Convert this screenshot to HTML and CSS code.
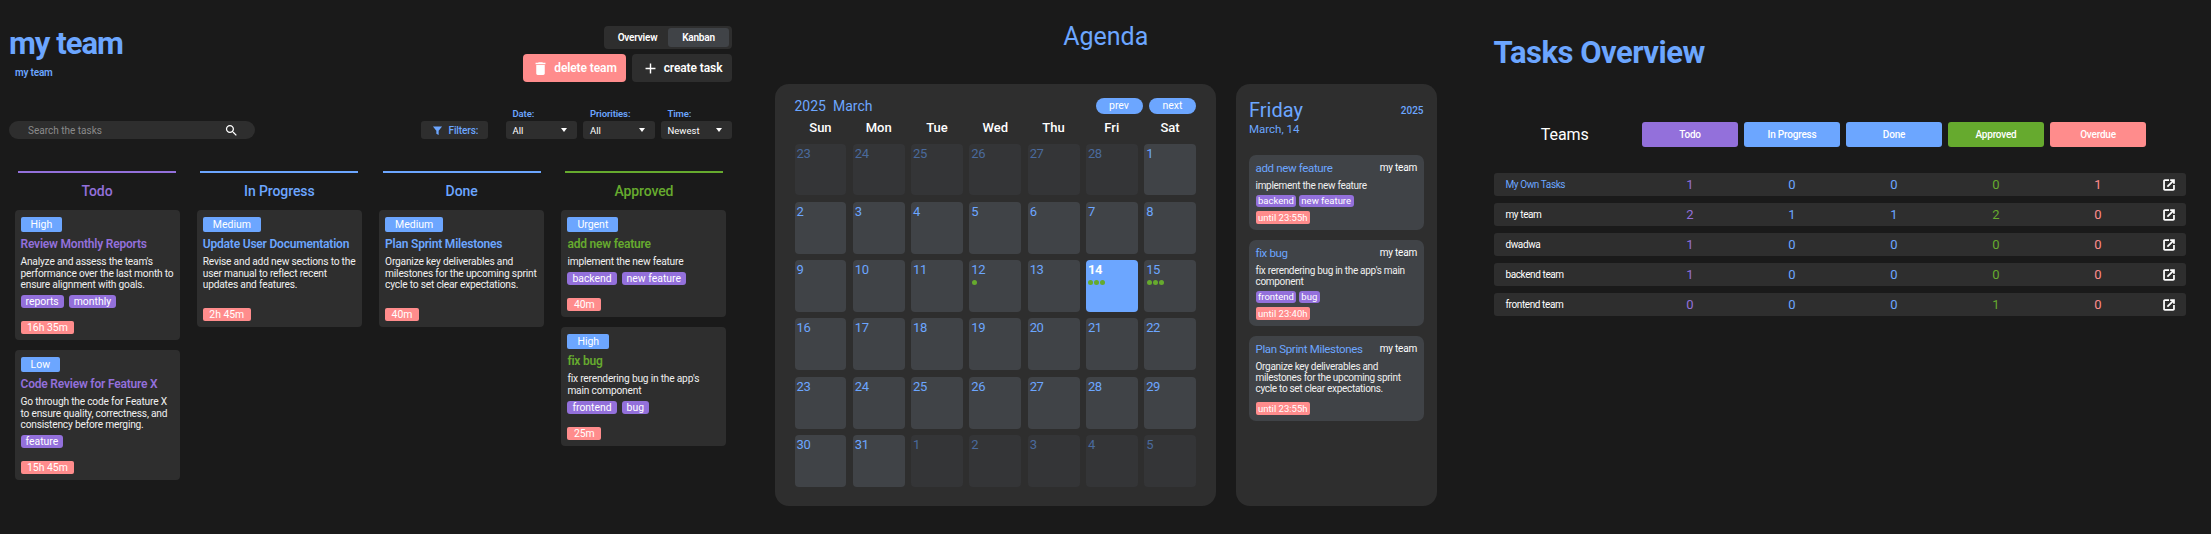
FILE: index.html
```html
<!DOCTYPE html>
<html lang="en">
<head>
  <meta charset="UTF-8" />
  <meta name="viewport" content="width=device-width, initial-scale=1.0"/>
  <title>Team Dashboard</title>
  <link rel="stylesheet" href="styles.css">
</head>
<body>
<div class="page">

  <!-- Kanban board -->
  <section class="board">
    <div class="board-head">
      <div>
        <h1>my team</h1>
        <div class="team-crumb">my team</div>
      </div>
      <div class="board-actions">
        <div class="tabs">
          <span class="tab">Overview</span>
          <span class="tab active">Kanban</span>
        </div>
        <div class="action-row">
          <button class="btn btn-delete">
            <svg viewBox="0 0 24 24" width="17" height="17"><path fill="#fff" d="M6 19c0 1.1.9 2 2 2h8c1.1 0 2-.9 2-2V7H6v12zM19 4h-3.5l-1-1h-5l-1 1H5v2h14V4z"/></svg>
            delete team
          </button>
          <button class="btn btn-create">
            <svg viewBox="0 0 24 24" width="17" height="17"><path fill="#fff" d="M19 13h-6v6h-2v-6H5v-2h6V5h2v6h6v2z"/></svg>
            create task
          </button>
        </div>
      </div>
    </div>

    <div class="toolbar">
      <div class="search">
        <input type="text" placeholder="Search the tasks" />
        <svg viewBox="0 0 24 24" width="15" height="15"><path fill="#fff" d="M15.5 14h-.79l-.28-.27C15.41 12.59 16 11.11 16 9.5 16 5.91 13.09 3 9.5 3S3 5.91 3 9.5 5.91 16 9.5 16c1.61 0 3.09-.59 4.23-1.57l.27.28v.79l5 4.99L20.49 19l-4.99-5zm-6 0C7.01 14 5 11.99 5 9.5S7.01 5 9.5 5 14 7.01 14 9.5 11.99 14 9.5 14z"/></svg>
      </div>
      <div class="filters-label">
        <svg viewBox="0 0 24 24" width="11" height="11"><path fill="#6ca6ff" d="M2 3h20l-7.5 9.5V22l-5-3v-6.500z"/></svg>
        Filters:
      </div>
      <div class="filter">
        <label>Date:</label>
        <div class="select"><span>All</span><i class="caret"></i></div>
      </div>
      <div class="filter">
        <label>Priorities:</label>
        <div class="select"><span>All</span><i class="caret"></i></div>
      </div>
      <div class="filter">
        <label>Time:</label>
        <div class="select"><span>Newest</span><i class="caret"></i></div>
      </div>
    </div>

    <div class="columns">
      <div class="column todo">
        <div class="column-title">Todo</div>
        <div class="card">
          <span class="priority">High</span>
          <div class="card-title">Review Monthly Reports</div>
          <p class="card-desc">Analyze and assess the team's performance over the last month to ensure alignment with goals.</p>
          <div class="tags"><span class="tag">reports</span><span class="tag">monthly</span></div>
          <span class="time">16h 35m</span>
        </div>
        <div class="card">
          <span class="priority">Low</span>
          <div class="card-title">Code Review for Feature X</div>
          <p class="card-desc">Go through the code for Feature X to ensure quality, correctness, and consistency before merging.</p>
          <div class="tags"><span class="tag">feature</span></div>
          <span class="time">15h 45m</span>
        </div>
      </div>

      <div class="column progress">
        <div class="column-title">In Progress</div>
        <div class="card">
          <span class="priority">Medium</span>
          <div class="card-title">Update User Documentation</div>
          <p class="card-desc">Revise and add new sections to the user manual to reflect recent updates and features.</p>
          <span class="time">2h 45m</span>
        </div>
      </div>

      <div class="column done">
        <div class="column-title">Done</div>
        <div class="card">
          <span class="priority">Medium</span>
          <div class="card-title">Plan Sprint Milestones</div>
          <p class="card-desc">Organize key deliverables and milestones for the upcoming sprint cycle to set clear expectations.</p>
          <span class="time">40m</span>
        </div>
      </div>

      <div class="column approved">
        <div class="column-title">Approved</div>
        <div class="card">
          <span class="priority">Urgent</span>
          <div class="card-title">add new feature</div>
          <p class="card-desc">implement the new feature</p>
          <div class="tags"><span class="tag">backend</span><span class="tag">new feature</span></div>
          <span class="time">40m</span>
        </div>
        <div class="card">
          <span class="priority">High</span>
          <div class="card-title">fix bug</div>
          <p class="card-desc">fix rerendering bug in the app's main component</p>
          <div class="tags"><span class="tag">frontend</span><span class="tag">bug</span></div>
          <span class="time">25m</span>
        </div>
      </div>
    </div>
  </section>

  <!-- Agenda -->
  <section class="agenda">
    <h2>Agenda</h2>
    <div class="agenda-panels">
      <div class="calendar">
        <div class="cal-head">
          <div class="cal-month"><span>2025</span><span>March</span></div>
          <div class="cal-nav">
            <button>prev</button>
            <button>next</button>
          </div>
        </div>
        <div class="cal-days">
          <span>Sun</span><span>Mon</span><span>Tue</span><span>Wed</span><span>Thu</span><span>Fri</span><span>Sat</span>
        </div>
        <div class="cal-grid">
          <div class="day off">23</div><div class="day off">24</div><div class="day off">25</div><div class="day off">26</div><div class="day off">27</div><div class="day off">28</div><div class="day">1</div>
          <div class="day">2</div><div class="day">3</div><div class="day">4</div><div class="day">5</div><div class="day">6</div><div class="day">7</div><div class="day">8</div>
          <div class="day">9</div><div class="day">10</div><div class="day">11</div>
          <div class="day">12<div class="dots"><i></i></div></div>
          <div class="day">13</div>
          <div class="day today">14<div class="dots"><i></i><i></i><i></i></div></div>
          <div class="day">15<div class="dots"><i></i><i></i><i></i></div></div>
          <div class="day">16</div><div class="day">17</div><div class="day">18</div><div class="day">19</div><div class="day">20</div><div class="day">21</div><div class="day">22</div>
          <div class="day">23</div><div class="day">24</div><div class="day">25</div><div class="day">26</div><div class="day">27</div><div class="day">28</div><div class="day">29</div>
          <div class="day">30</div><div class="day">31</div><div class="day off">1</div><div class="day off">2</div><div class="day off">3</div><div class="day off">4</div><div class="day off">5</div>
        </div>
      </div>

      <div class="day-panel">
        <div class="day-head">
          <div class="day-name">Friday</div>
          <div class="day-year">2025</div>
        </div>
        <div class="day-date">March, 14</div>

        <div class="event">
          <div class="event-head"><span class="event-title">add new feature</span><span class="event-team">my team</span></div>
          <p class="event-desc">implement the new feature</p>
          <div class="event-tags"><span class="tag">backend</span><span class="tag">new feature</span></div>
          <span class="event-time">until 23:55h</span>
        </div>
        <div class="event">
          <div class="event-head"><span class="event-title">fix bug</span><span class="event-team">my team</span></div>
          <p class="event-desc">fix rerendering bug in the app's main component</p>
          <div class="event-tags"><span class="tag">frontend</span><span class="tag">bug</span></div>
          <span class="event-time">until 23:40h</span>
        </div>
        <div class="event">
          <div class="event-head"><span class="event-title">Plan Sprint Milestones</span><span class="event-team">my team</span></div>
          <p class="event-desc">Organize key deliverables and milestones for the upcoming sprint cycle to set clear expectations.</p>
          <span class="event-time">until 23:55h</span>
        </div>
      </div>
    </div>
  </section>

  <!-- Tasks overview table -->
  <section class="overview">
    <h2>Tasks Overview</h2>
    <div class="ov-row ov-header">
      <div class="ov-teams">Teams</div>
      <div class="ov-pill todo-bg">Todo</div>
      <div class="ov-pill progress-bg">In Progress</div>
      <div class="ov-pill progress-bg">Done</div>
      <div class="ov-pill approved-bg">Approved</div>
      <div class="ov-pill overdue-bg">Overdue</div>
    </div>

    <div class="ov-row team-row">
      <div class="team-name own">My Own Tasks</div>
      <div class="num c-todo">1</div><div class="num c-blue">0</div><div class="num c-blue">0</div><div class="num c-green">0</div><div class="num c-red">1</div>
      <svg class="open" viewBox="0 0 24 24"><path fill="#fff" d="M19 19H5V5h7V2H5C3.300 2 2 3.300 2 5v14c0 1.700 1.300 3 3 3h14c1.700 0 3-1.300 3-3v-7h-3v7zM14 2v3h2.900l-8.700 8.700 2.100 2.100L19 7.100V10h3V2h-8z"/></svg>
    </div>
    <div class="ov-row team-row">
      <div class="team-name">my team</div>
      <div class="num c-todo">2</div><div class="num c-blue">1</div><div class="num c-blue">1</div><div class="num c-green">2</div><div class="num c-red">0</div>
      <svg class="open" viewBox="0 0 24 24"><path fill="#fff" d="M19 19H5V5h7V2H5C3.300 2 2 3.300 2 5v14c0 1.700 1.300 3 3 3h14c1.700 0 3-1.300 3-3v-7h-3v7zM14 2v3h2.900l-8.700 8.700 2.100 2.100L19 7.100V10h3V2h-8z"/></svg>
    </div>
    <div class="ov-row team-row">
      <div class="team-name">dwadwa</div>
      <div class="num c-todo">1</div><div class="num c-blue">0</div><div class="num c-blue">0</div><div class="num c-green">0</div><div class="num c-red">0</div>
      <svg class="open" viewBox="0 0 24 24"><path fill="#fff" d="M19 19H5V5h7V2H5C3.300 2 2 3.300 2 5v14c0 1.700 1.300 3 3 3h14c1.700 0 3-1.300 3-3v-7h-3v7zM14 2v3h2.900l-8.700 8.700 2.100 2.100L19 7.100V10h3V2h-8z"/></svg>
    </div>
    <div class="ov-row team-row">
      <div class="team-name">backend team</div>
      <div class="num c-todo">1</div><div class="num c-blue">0</div><div class="num c-blue">0</div><div class="num c-green">0</div><div class="num c-red">0</div>
      <svg class="open" viewBox="0 0 24 24"><path fill="#fff" d="M19 19H5V5h7V2H5C3.300 2 2 3.300 2 5v14c0 1.700 1.300 3 3 3h14c1.700 0 3-1.300 3-3v-7h-3v7zM14 2v3h2.900l-8.700 8.700 2.100 2.100L19 7.100V10h3V2h-8z"/></svg>
    </div>
    <div class="ov-row team-row">
      <div class="team-name">frontend team</div>
      <div class="num c-todo">0</div><div class="num c-blue">0</div><div class="num c-blue">0</div><div class="num c-green">1</div><div class="num c-red">0</div>
      <svg class="open" viewBox="0 0 24 24"><path fill="#fff" d="M19 19H5V5h7V2H5C3.300 2 2 3.300 2 5v14c0 1.700 1.300 3 3 3h14c1.700 0 3-1.300 3-3v-7h-3v7zM14 2v3h2.900l-8.700 8.700 2.100 2.100L19 7.100V10h3V2h-8z"/></svg>
    </div>
  </section>

</div>
</body>
</html>
```

FILE: styles.css
```css
* {
  box-sizing: border-box;
}

body {
  margin: 0;
  background: #1a1a1a;
  color: #fff;
  font-family: Roboto, "Liberation Sans", sans-serif;
  overflow: hidden;
}

button {
  font-family: inherit;
  border: none;
  cursor: pointer;
}

.page {
  display: flex;
  height: 534px;
}

/* Board */
.board {
  width: 740px;
  flex: none;
  padding: 26px 8px 0 9px;
}

.board-head {
  display: flex;
  justify-content: space-between;
}

h1 {
  margin: 0;
  color: #6ca6ff;
  font-size: 31px;
  line-height: 36px;
  font-weight: 700;
  letter-spacing: -1px;
}

.team-crumb {
  margin: 4px 0 0 6px;
  color: #6ca6ff;
  font-size: 10px;
  line-height: 14px;
  font-weight: 600;
  letter-spacing: -0.2px;
}

.board-actions {
  display: flex;
  flex-direction: column;
  align-items: flex-end;
}

.tabs {
  display: flex;
  width: 128px;
  height: 23px;
  padding: 2px 3px;
  background: #2e2e2e;
  border-radius: 4px;
}

.tab {
  flex: 1;
  display: flex;
  align-items: center;
  justify-content: center;
  border-radius: 3px;
  font-size: 10px;
  font-weight: 600;
  letter-spacing: -0.2px;
}

.tab.active {
  background: #404347;
}

.action-row {
  display: flex;
  gap: 6px;
  margin-top: 5px;
}

.btn {
  display: flex;
  align-items: center;
  justify-content: center;
  gap: 5px;
  height: 28px;
  padding: 0;
  border-radius: 4px;
  color: #fff;
  font-size: 12px;
  font-weight: 600;
  letter-spacing: -0.1px;
  white-space: nowrap;
}

.btn-delete {
  width: 103px;
  background: #ff8c8c;
}

.btn-create {
  width: 100px;
  background: #2e2e2e;
}

.toolbar {
  display: flex;
  align-items: flex-end;
  margin-top: 27px;
}

.search {
  display: flex;
  align-items: center;
  width: 246px;
  height: 18px;
  padding: 0 16px 0 19px;
  background: #2e2e2e;
  border-radius: 9px;
}

.search input {
  flex: 1;
  min-width: 0;
  padding: 0;
  border: none;
  outline: none;
  background: none;
  color: #fff;
  font-family: inherit;
  font-size: 10px;
}

.search input::placeholder {
  color: #8a8a8a;
}

.filters-label {
  display: flex;
  align-items: center;
  gap: 6px;
  width: 67px;
  height: 18px;
  margin-left: auto;
  margin-right: 18px;
  padding-left: 11px;
  background: #2e2e2e;
  border-radius: 3px;
  color: #6ca6ff;
  font-size: 10px;
  font-weight: 500;
  letter-spacing: -0.1px;
}

.filter {
  width: 71.5px;
  margin-left: 6px;
}

.filters-label + .filter {
  margin-left: 0;
}

.filter label {
  display: block;
  margin: 0 0 2px 7px;
  color: #6ca6ff;
  font-size: 9.5px;
  line-height: 10px;
  font-weight: 600;
  letter-spacing: -0.1px;
}

.select {
  display: flex;
  align-items: center;
  justify-content: space-between;
  height: 18px;
  padding: 0 10px 0 7px;
  background: #2e2e2e;
  border-radius: 3px;
  font-size: 9.5px;
}

.caret {
  border-left: 3.5px solid transparent;
  border-right: 3.5px solid transparent;
  border-top: 4px solid #fff;
}

.columns {
  display: flex;
  gap: 17.3px;
  margin: 32px 0 0 5.5px;
}

.column {
  width: 165px;
  flex: none;
}

.column-title {
  margin: 0 3.500px 11px;
  padding-top: 10px;
  border-top: 2.5px solid;
  text-align: center;
  font-size: 14px;
  line-height: 16px;
  font-weight: 500;
  letter-spacing: -0.1px;
}

.todo .column-title,
.todo .card-title {
  color: #9370db;
}

.progress .column-title,
.progress .card-title,
.done .column-title,
.done .card-title {
  color: #6ca6ff;
}

.approved .column-title,
.approved .card-title {
  color: #66aa2e;
}

.card {
  display: flex;
  flex-direction: column;
  align-items: flex-start;
  margin-bottom: 10px;
  padding: 6.500px 6px 6px;
  background: #2e2e2e;
  border-radius: 4px;
}

.priority {
  height: 15px;
  padding: 0 10px;
  background: #6ca6ff;
  border-radius: 2px;
  font-size: 10.5px;
  line-height: 15px;
}

.card-title {
  margin-top: 5.500px;
  font-size: 12px;
  line-height: 14px;
  font-weight: 600;
  letter-spacing: -0.2px;
}

.card-desc {
  margin: 5px 0 4.500px;
  color: #f0f0f0;
  font-size: 10.2px;
  line-height: 11.500px;
  letter-spacing: -0.2px;
}

.tags {
  display: flex;
  gap: 5px;
}

.tag {
  height: 13px;
  padding: 0 5px;
  background: #9370db;
  border-radius: 3px;
  font-size: 10.4px;
  line-height: 13px;
}

.time {
  height: 13px;
  margin-top: 13px;
  padding: 0 6.500px;
  background: #ff8c8c;
  border-radius: 2px;
  font-size: 10.4px;
  line-height: 13px;
}

/* Agenda */
.agenda {
  width: 661.500px;
  flex: none;
  margin-left: 35px;
  padding-top: 21px;
}

h2 {
  margin: 0;
  color: #6ca6ff;
  font-weight: 400;
}

.agenda h2 {
  font-size: 25px;
  line-height: 32px;
  text-align: center;
}

.agenda-panels {
  display: flex;
  gap: 20px;
  margin-top: 31px;
}

.calendar {
  width: 441px;
  height: 422px;
  padding: 14px 20px 0 19.500px;
  background: #2e2e2e;
  border-radius: 14px;
}

.cal-head {
  display: flex;
  justify-content: space-between;
  align-items: center;
  height: 16px;
}

.cal-month {
  display: flex;
  gap: 7px;
  color: #6ca6ff;
  font-size: 14px;
}

.cal-nav {
  display: flex;
  gap: 6.500px;
}

.cal-nav button {
  width: 47px;
  height: 16px;
  padding: 0;
  background: #6ca6ff;
  border-radius: 8px;
  color: #fff;
  font-size: 10.5px;
  line-height: 16px;
}

.cal-days {
  display: grid;
  grid-template-columns: repeat(7, 1fr);
  gap: 6.400px;
  margin-top: 6px;
  text-align: center;
  font-size: 13px;
  line-height: 16px;
  font-weight: 500;
}

.cal-grid {
  display: grid;
  grid-template-columns: repeat(7, 1fr);
  gap: 6.400px;
  margin-top: 7.500px;
}

.day {
  aspect-ratio: 1;
  padding: 3px 2px 0;
  background: #404347;
  border-radius: 4px;
  color: #6ca6ff;
  font-size: 13px;
  line-height: 14px;
  letter-spacing: -0.4px;
}

.day.off {
  background: #343537;
  color: #4a6a9c;
}

.day.today {
  background: #6ca6ff;
  color: #fff;
  font-weight: 700;
}

.dots {
  display: flex;
  gap: 1px;
  margin: 3px 0 0 0.500px;
}

.dots i {
  width: 5px;
  height: 5px;
  border-radius: 50%;
  background: #66aa2e;
}

.day-panel {
  width: 200.500px;
  height: 422px;
  padding: 12px 13px 0;
  background: #2e2e2e;
  border-radius: 14px;
}

.day-head {
  display: flex;
  justify-content: space-between;
  align-items: center;
}

.day-name {
  color: #6ca6ff;
  font-size: 20px;
  line-height: 28px;
}

.day-year {
  color: #6ca6ff;
  font-size: 10px;
  font-weight: 500;
}

.day-date {
  margin-top: -2px;
  margin-bottom: 18px;
  color: #6ca6ff;
  font-size: 11.500px;
  line-height: 15px;
}

.event {
  display: flex;
  flex-direction: column;
  align-items: flex-start;
  margin-bottom: 10px;
  padding: 6px 6.500px;
  background: #404347;
  border-radius: 7px;
}

.event-head {
  display: flex;
  justify-content: space-between;
  align-items: center;
  width: 100%;
  line-height: 14px;
}

.event-title {
  color: #6ca6ff;
  font-size: 11.500px;
  letter-spacing: -0.35px;
}

.event-team {
  font-size: 10px;
  letter-spacing: -0.2px;
}

.event-desc {
  margin: 5px 0 4px;
  color: #f0f0f0;
  font-size: 10px;
  line-height: 11px;
  letter-spacing: -0.3px;
}

.event-tags {
  display: flex;
  gap: 2.500px;
}

.event-tags .tag {
  height: 12px;
  padding: 0 2.500px;
  font-size: 9.500px;
  line-height: 12px;
}

.event-time {
  height: 13px;
  margin-top: 4px;
  padding: 0 2.500px;
  background: #ff8c8c;
  border-radius: 2px;
  font-size: 9.500px;
  line-height: 13px;
}

/* Overview */
.overview {
  width: 692px;
  flex: none;
  margin-left: 57px;
  padding-top: 35px;
}

.overview h2 {
  font-size: 31px;
  line-height: 36px;
  font-weight: 700;
  letter-spacing: -0.5px;
}

.ov-row {
  display: grid;
  grid-template-columns: 142.500px repeat(5, 96px) 1fr;
  column-gap: 6px;
  align-items: center;
}

.ov-header {
  height: 25px;
  margin-top: 51px;
  margin-bottom: 26px;
}

.ov-teams {
  text-align: center;
  font-size: 16px;
  letter-spacing: -0.1px;
}

.ov-pill {
  height: 25px;
  border-radius: 3px;
  text-align: center;
  font-size: 10px;
  line-height: 25px;
  font-weight: 500;
  letter-spacing: -0.2px;
}

.todo-bg {
  background: #9370db;
}

.progress-bg {
  background: #6ca6ff;
}

.approved-bg {
  background: #66aa2e;
}

.overdue-bg {
  background: #ff8c8c;
}

.team-row {
  height: 23px;
  margin-bottom: 7px;
  background: #2e2e2e;
  border-radius: 3px;
}

.team-name {
  padding-left: 12px;
  font-size: 10px;
  letter-spacing: -0.4px;
}

.team-name.own {
  color: #6ca6ff;
}

.num {
  text-align: center;
  font-size: 13px;
}

.c-todo {
  color: #9370db;
}

.c-blue {
  color: #6ca6ff;
}

.c-green {
  color: #66aa2e;
}

.c-red {
  color: #ff8c8c;
}

.open {
  width: 14px;
  height: 14px;
  justify-self: center;
}
```
